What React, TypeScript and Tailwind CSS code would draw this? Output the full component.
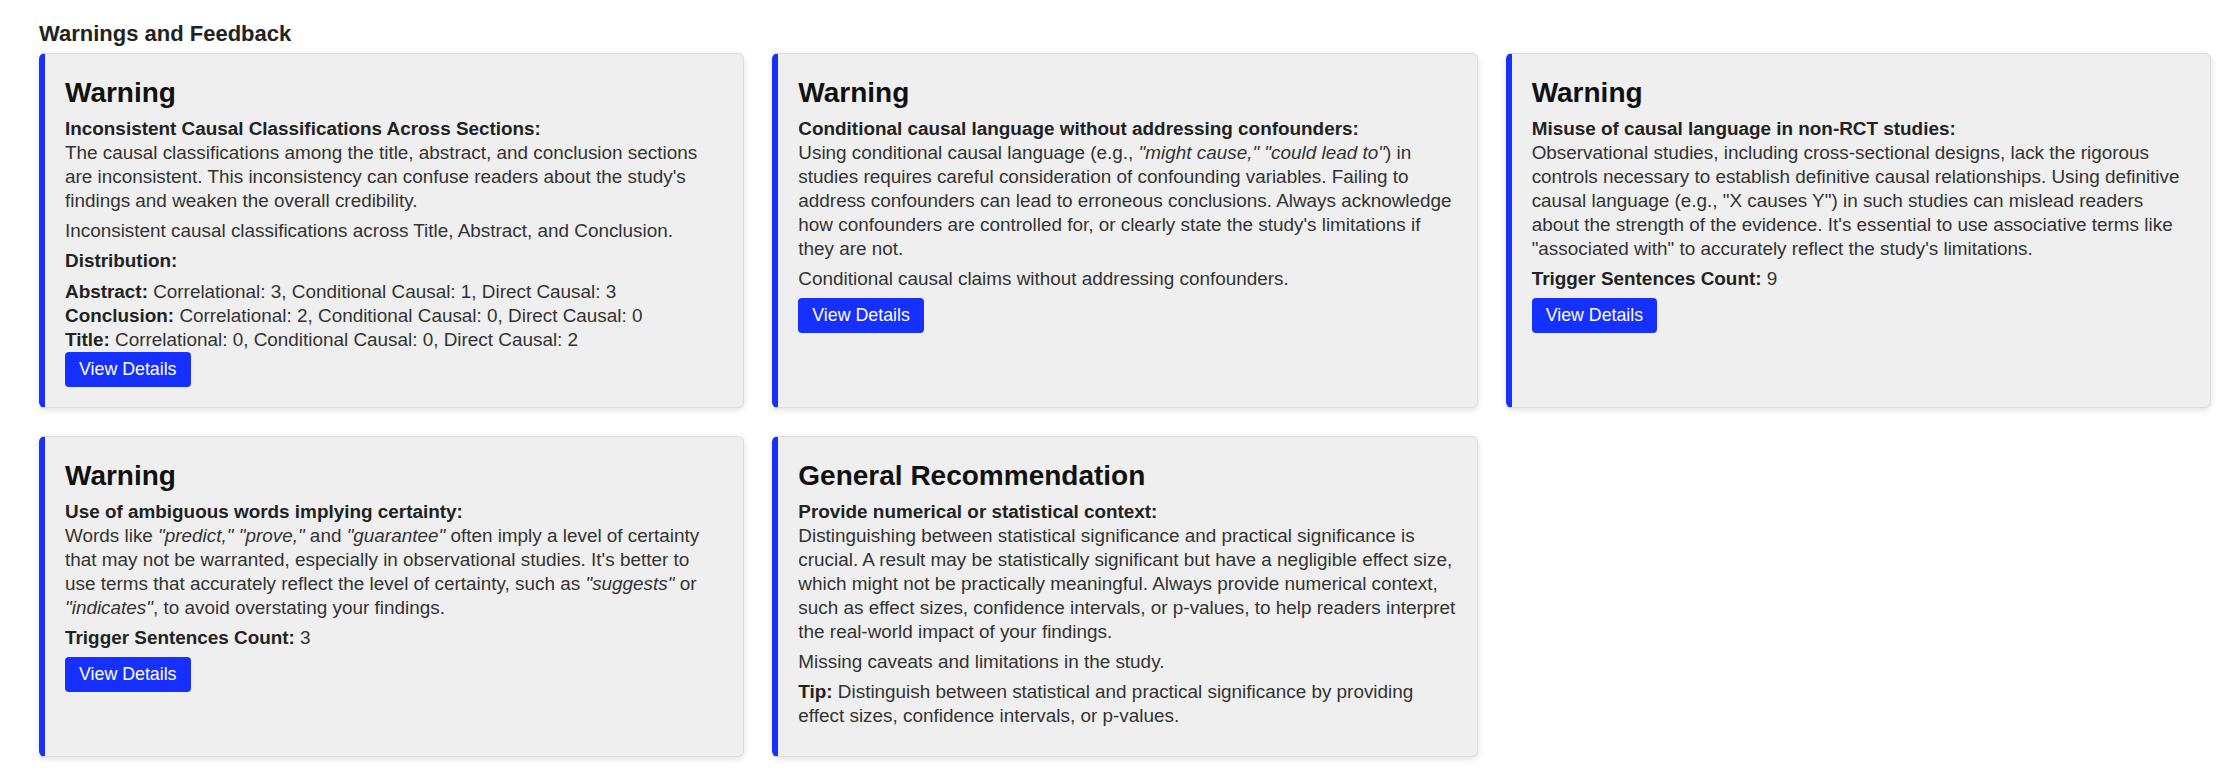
import React from "react";

const BLUE = "bg-[#1530ff]";

function Card({ title, children }: { title: string; children: React.ReactNode }) {
  return (
    <div className="rounded-[6px] border border-[#dcdcdc] border-l-[6px] border-l-[#1530ff] bg-[#efefef] pl-[20px] pr-[19px] pt-[20px] pb-[20px] shadow-[0_2px_6px_rgba(0,0,0,0.12)]">
      <h3 className="mt-[3px] mb-[8px] text-[28px] font-bold leading-[32px] text-[#111]">{title}</h3>
      {children}
    </div>
  );
}

function Btn() {
  return (
    <button className={`${BLUE} rounded-[4px] px-[14px] py-[7px] text-[17.8px] leading-[21px] text-white`}>
      View Details
    </button>
  );
}

export default function App() {
  return (
    <div
      className="min-h-screen bg-white pl-[39px] pr-[25px] pt-[21px] text-[#333]"
      style={{ fontFamily: '"Liberation Sans", Arial, Helvetica, sans-serif' }}
    >
      <h2 className="mb-[6px] text-[22px] font-bold leading-[26px] text-[#222]">Warnings and Feedback</h2>
      <div className="grid grid-cols-3 gap-x-[28px] gap-y-[28px] text-[18.9px] leading-[24px]">
        <Card title="Warning">
          <p className="mb-[6px]">
            <strong className="text-[#222]">Inconsistent Causal Classifications Across Sections:</strong>
            <br />
            The causal classifications among the title, abstract, and conclusion sections are inconsistent. This
            inconsistency can confuse readers about the study's findings and weaken the overall credibility.
          </p>
          <p className="my-[6px]">Inconsistent causal classifications across Title, Abstract, and Conclusion.</p>
          <p className="my-[6px]">
            <strong className="text-[#222]">Distribution:</strong>
          </p>
          <div className="mt-[7px]">
            <div>
              <strong className="text-[#222]">Abstract:</strong> Correlational: 3, Conditional Causal: 1, Direct Causal: 3
            </div>
            <div>
              <strong className="text-[#222]">Conclusion:</strong> Correlational: 2, Conditional Causal: 0, Direct Causal: 0
            </div>
            <div>
              <strong className="text-[#222]">Title:</strong> Correlational: 0, Conditional Causal: 0, Direct Causal: 2
            </div>
          </div>
          <Btn />
        </Card>

        <Card title="Warning">
          <p className="mb-[6px]">
            <strong className="text-[#222]">Conditional causal language without addressing confounders:</strong>
            <br />
            Using conditional causal language (e.g., <em>"might cause," "could lead to"</em>) in studies requires careful
            consideration of confounding variables. Failing to address confounders can lead to erroneous conclusions.
            Always acknowledge how confounders are controlled for, or clearly state the study's limitations if they are
            not.
          </p>
          <p className="my-[6px]">Conditional causal claims without addressing confounders.</p>
          <div className="mt-[7px]">
            <Btn />
          </div>
        </Card>

        <Card title="Warning">
          <p className="mb-[6px]">
            <strong className="text-[#222]">Misuse of causal language in non-RCT studies:</strong>
            <br />
            Observational studies, including cross-sectional designs, lack the rigorous controls necessary to establish
            definitive causal relationships. Using definitive causal language (e.g., "X causes Y") in such studies can
            mislead readers about the strength of the evidence. It's essential to use associative terms like "associated
            with" to accurately reflect the study's limitations.
          </p>
          <p className="my-[6px]">
            <strong className="text-[#222]">Trigger Sentences Count:</strong> 9
          </p>
          <div className="mt-[7px]">
            <Btn />
          </div>
        </Card>

        <Card title="Warning">
          <p className="mb-[6px]">
            <strong className="text-[#222]">Use of ambiguous words implying certainty:</strong>
            <br />
            Words like <em>"predict," "prove,"</em> and <em>"guarantee"</em> often imply a level of certainty that may not
            be warranted, especially in observational studies. It's better to use terms that accurately reflect the level
            of certainty, such as <em>"suggests"</em> or <em>"indicates"</em>, to avoid overstating your findings.
          </p>
          <p className="my-[6px]">
            <strong className="text-[#222]">Trigger Sentences Count:</strong> 3
          </p>
          <div className="mt-[7px]">
            <Btn />
          </div>
        </Card>

        <Card title="General Recommendation">
          <p className="mb-[6px]">
            <strong className="text-[#222]">Provide numerical or statistical context:</strong>
            <br />
            Distinguishing between statistical significance and practical significance is crucial. A result may be
            statistically significant but have a negligible effect size, which might not be practically meaningful.
            Always provide numerical context, such as effect sizes, confidence intervals, or p-values, to help readers
            interpret the real-world impact of your findings.
          </p>
          <p className="my-[6px]">Missing caveats and limitations in the study.</p>
          <p className="mt-[6px] mb-[8px]">
            <strong className="text-[#222]">Tip:</strong> Distinguish between statistical and practical significance by
            providing effect sizes, confidence intervals, or p-values.
          </p>
        </Card>
      </div>
    </div>
  );
}
